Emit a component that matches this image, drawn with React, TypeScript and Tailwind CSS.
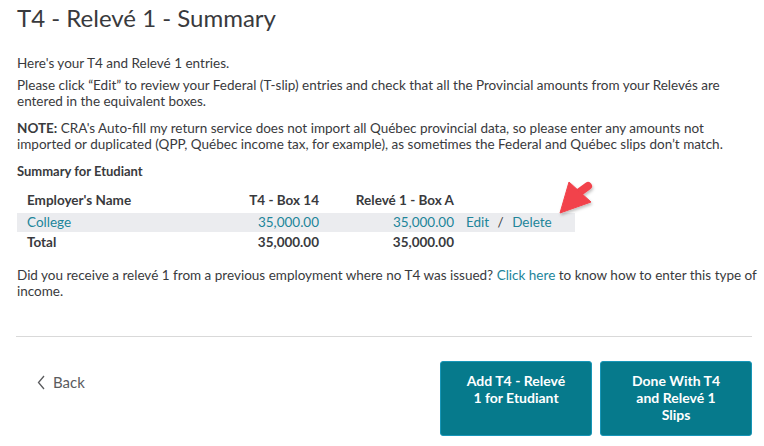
import React from "react";

const rows = [{ name: "College", t4: "35,000.00", rl1: "35,000.00" }];

function Arrow() {
  return (
    <svg
      className="pointer-events-none absolute left-[540px] top-[170px]"
      width="64"
      height="54"
      viewBox="540 170 64 54"
    >
      <defs>
        <filter id="sh" x="-30%" y="-30%" width="160%" height="160%">
          <feDropShadow dx="1" dy="2" stdDeviation="1.5" floodColor="#000" floodOpacity="0.25" />
        </filter>
      </defs>
      <g filter="url(#sh)" fill="#f2424b" stroke="#f2424b">
        <line x1="577" y1="194" x2="588" y2="186" strokeWidth="8" strokeLinecap="round" />
        <polygon points="560,213 569,182 591,202" strokeWidth="1" strokeLinejoin="round" />
      </g>
    </svg>
  );
}

export default function App() {
  return (
    <div className="relative h-[446px] w-[764px] overflow-hidden bg-white font-['Lato',sans-serif] text-[#393a3d]">
      <div className="px-[17px] pt-[3px]">
        <h1 className="text-[24px] leading-[30px]">T4 - Relevé 1 - Summary</h1>

        <div className="mt-[22px] text-[13.5px] leading-[16px]">
          <p>Here&apos;s your T4 and Relevé 1 entries.</p>
          <p className="mt-[6px] whitespace-nowrap">
            Please click “Edit” to review your Federal (T-slip) entries and check that all the Provincial amounts from your Relevés are
            <br />
            entered in the equivalent boxes.
          </p>
          <p className="mt-[11px] whitespace-nowrap">
            <b>NOTE:</b> CRA&apos;s Auto-fill my return service does not import all Québec provincial data, so please enter any amounts not
            <br />
            imported or duplicated (QPP, Québec income tax, for example), as sometimes the Federal and Québec slips don’t match.
          </p>
        </div>

        <h2 className="mt-[11px] text-[13px] font-bold leading-[16px]">Summary for Etudiant</h2>

        <div className="mt-[12px] w-[558px] text-[13.5px] leading-[19px]">
          <div className="grid grid-cols-[172px_130px_135px_1fr] font-bold">
            <div className="pl-[10px]">Employer&apos;s Name</div>
            <div className="text-right">T4 - Box 14</div>
            <div className="text-right">Relevé 1 - Box A</div>
            <div />
          </div>
          {rows.map((r) => (
            <div key={r.name} className="mt-[3px] grid grid-cols-[172px_130px_135px_1fr] bg-[#ebecef] text-[#21859a]">
              <div className="pl-[10px]">{r.name}</div>
              <div className="text-right">{r.t4}</div>
              <div className="text-right">{r.rl1}</div>
              <div className="pl-[12px]">
                Edit <span className="px-[5px] text-[#393a3d]">/</span> Delete
              </div>
            </div>
          ))}
          <div className="mt-px grid grid-cols-[172px_130px_135px_1fr] font-bold">
            <div className="pl-[10px]">Total</div>
            <div className="text-right">35,000.00</div>
            <div className="text-right">35,000.00</div>
            <div />
          </div>
        </div>

        <p className="mt-[15px] whitespace-nowrap text-[13.5px] leading-[16px]">
          Did you receive a relevé 1 from a previous employment where no T4 was issued?{" "}
          <span className="text-[#21859a]">Click here</span> to know how to enter this type of
          <br />
          income.
        </p>
      </div>

      <div className="mx-[16px] mt-[37px] h-px w-[736px] bg-[#d9d9d9]" />

      <div className="mt-[24px] flex items-start pl-[37px] pr-[12px]">
        <button className="mt-[10px] flex items-center gap-[7px] text-[15px] text-[#5a5b5e]">
          <svg width="9" height="15" viewBox="0 0 9 15" fill="none" stroke="#5a5b5e" strokeWidth="1.3">
            <path d="M7 1 L1.5 7.5 L7 14" />
          </svg>
          Back
        </button>
        <div className="ml-auto flex gap-[8px]">
          <button className="flex h-[75px] w-[152px] items-start justify-center rounded-[3px] border border-[#1796b8] bg-[#067a8c] px-[22px] pt-[10px] text-center text-[14px] font-bold leading-[17px] text-white">
            Add T4 - Relevé 1 for Etudiant
          </button>
          <button className="flex h-[75px] w-[152px] items-start justify-center rounded-[3px] border border-[#1796b8] bg-[#067a8c] px-[24px] pt-[10px] text-center text-[14px] font-bold leading-[17px] text-white">
            Done With T4 and Relevé 1 Slips
          </button>
        </div>
      </div>

      <Arrow />
    </div>
  );
}
